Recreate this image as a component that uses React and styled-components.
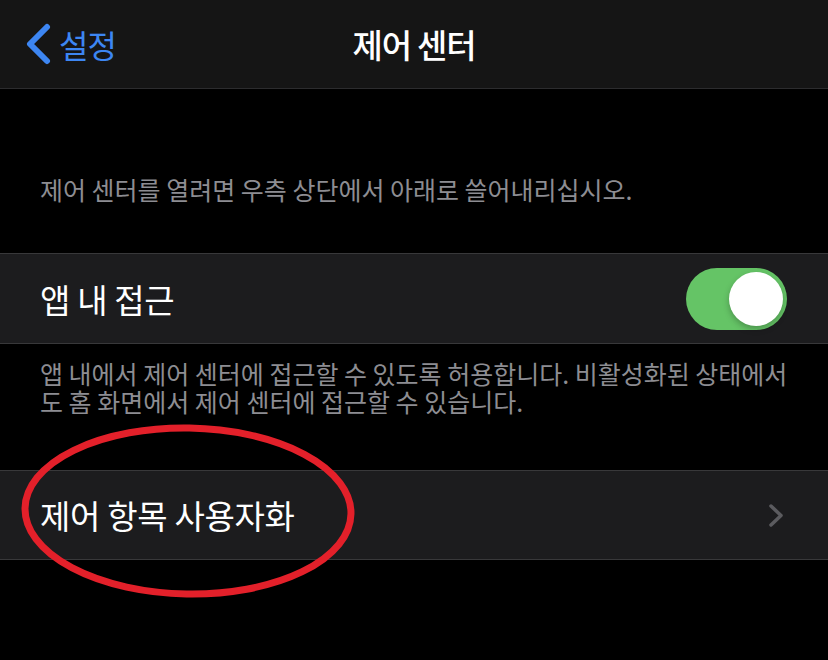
import React from "react";
import styled, { createGlobalStyle } from "styled-components";

const GlobalStyle = createGlobalStyle`
  html, body {
    margin: 0;
    padding: 0;
    background: #000;
  }
  body {
    font-family: "Noto Sans CJK KR", "Noto Sans", sans-serif;
    -webkit-font-smoothing: antialiased;
  }
`;

const Screen = styled.div`
  position: relative;
  width: 828px;
  height: 660px;
  background: #000;
  overflow: hidden;
`;

const NavBar = styled.header`
  display: grid;
  grid-template-columns: 1fr auto 1fr;
  align-items: center;
  height: 88px;
  background: #151515;
  border-bottom: 1px solid #2c2c2e;
`;

const BackButton = styled.div`
  display: flex;
  align-items: center;
  gap: 8px;
  padding-left: 25px;
  color: #3d86f2;
  font-size: 32px;
  letter-spacing: -1px;
`;

const Title = styled.h1`
  margin: 0;
  color: #fff;
  font-size: 33px;
  font-weight: 500;
  letter-spacing: -1.2px;
`;

const GroupHeader = styled.p`
  margin: 0;
  padding: 85px 40px 49px;
  color: #8d8d92;
  font-size: 25px;
  line-height: 30px;
`;

const GroupFooter = styled.p`
  margin: 0;
  padding: ${(p) => p.$top}px 36px ${(p) => p.$bottom}px 40px;
  color: #8d8d92;
  font-size: 25px;
  line-height: 28px;
`;

const Row = styled.div`
  display: flex;
  align-items: center;
  justify-content: space-between;
  height: ${(p) => p.$height}px;
  box-sizing: border-box;
  padding: 0 ${(p) => p.$right}px 0 40px;
  background: #1c1c1e;
  border-top: 1px solid #38383a;
  border-bottom: 1px solid #38383a;
`;

const RowLabel = styled.span`
  color: #fff;
  font-size: 33px;
  letter-spacing: -0.3px;
`;

const Toggle = styled.div`
  position: relative;
  width: 101px;
  height: 62px;
  border-radius: 31px;
  background: #65c466;
`;

const Knob = styled.div`
  position: absolute;
  top: 4px;
  right: 4px;
  width: 54px;
  height: 54px;
  border-radius: 50%;
  background: #fff;
  box-shadow: 0 3px 6px rgba(0, 0, 0, 0.25);
`;

const Circled = styled.svg`
  position: absolute;
  left: 14px;
  top: 418px;
  pointer-events: none;
`;

export default function App() {
  return (
    <Screen>
      <GlobalStyle />
      <NavBar>
        <BackButton>
          <svg width="26" height="42" viewBox="0 0 26 42">
            <polyline
              points="22,4 5,21 22,38"
              fill="none"
              stroke="#3d86f2"
              strokeWidth="6"
              strokeLinecap="round"
              strokeLinejoin="round"
            />
          </svg>
          설정
        </BackButton>
        <Title>제어 센터</Title>
        <div />
      </NavBar>

      <GroupHeader>제어 센터를 열려면 우측 상단에서 아래로 쓸어내리십시오.</GroupHeader>

      <Row $height={91} $right={41}>
        <RowLabel>앱 내 접근</RowLabel>
        <Toggle>
          <Knob />
        </Toggle>
      </Row>

      <GroupFooter $top={15} $bottom={55}>
        {"앱 내에서 제어 센터에 접근할 수 있도록 허용합니다. 비활성화된 상태에서도 홈 화면에서 제어 센터에 접근할 수 있습니다."}
      </GroupFooter>

      <Row $height={90} $right={44}>
        <RowLabel>제어 항목 사용자화</RowLabel>
        <svg width="16" height="25" viewBox="0 0 16 25">
          <polyline
            points="3,3 13,12.5 3,22"
            fill="none"
            stroke="#5b5b5f"
            strokeWidth="3.5"
            strokeLinecap="round"
            strokeLinejoin="round"
          />
        </svg>
      </Row>

      <Circled width="348" height="186" viewBox="0 0 348 186">
        <ellipse
          cx="174"
          cy="93"
          rx="163"
          ry="83"
          fill="none"
          stroke="#e3202a"
          strokeWidth="7"
          transform="rotate(1 174 93)"
        />
      </Circled>
    </Screen>
  );
}
